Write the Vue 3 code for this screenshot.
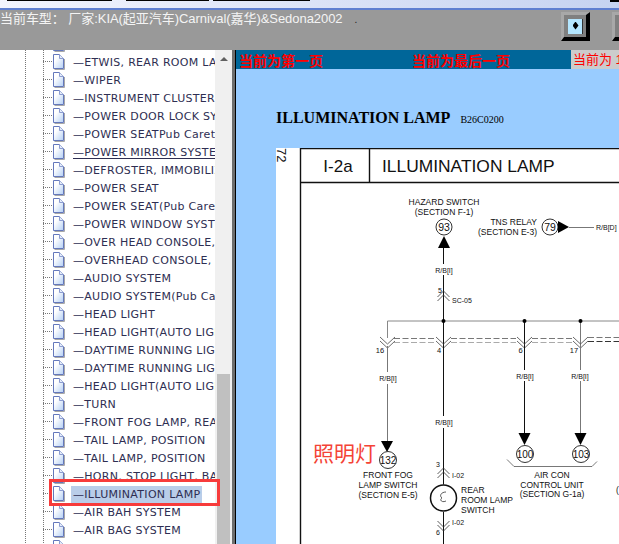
<script setup>
const items = [
  { name: '' },
  { name: 'ETWIS, REAR ROOM LAMP' },
  { name: 'WIPER' },
  { name: 'INSTRUMENT CLUSTER' },
  { name: 'POWER DOOR LOCK SYSTEM' },
  { name: 'POWER SEATPub Caret' },
  { name: 'POWER MIRROR SYSTEM', underline: true },
  { name: 'DEFROSTER, IMMOBILIZER' },
  { name: 'POWER SEAT' },
  { name: 'POWER SEAT(Pub Caret)' },
  { name: 'POWER WINDOW SYSTEM' },
  { name: 'OVER HEAD CONSOLE,' },
  { name: 'OVERHEAD CONSOLE,' },
  { name: 'AUDIO SYSTEM' },
  { name: 'AUDIO SYSTEM(Pub Caret)' },
  { name: 'HEAD LIGHT' },
  { name: 'HEAD LIGHT(AUTO LIGHT)' },
  { name: 'DAYTIME RUNNING LIGHT' },
  { name: 'DAYTIME RUNNING LIGHT' },
  { name: 'HEAD LIGHT(AUTO LIGHT)' },
  { name: 'TURN' },
  { name: 'FRONT FOG LAMP, REAR' },
  { name: 'TAIL LAMP, POSITION' },
  { name: 'TAIL LAMP, POSITION' },
  { name: 'HORN, STOP LIGHT, BACK' },
  { name: 'ILLUMINATION LAMP', selected: true },
  { name: 'AIR BAH SYSTEM' },
  { name: 'AIR BAG SYSTEM' },
  { name: '' },
]

// where each branch leaves the double bus on the wiring page
const busDrops = [
  { x: 387, num: '16', numX: 380 },
  { x: 443, num: '4', numX: 439 },
  { x: 524, num: '6', numX: 520.5 },
  { x: 580, num: '17', numX: 574 },
]
</script>

<template>
  <div class="screen">
    <svg class="defs" width="0" height="0">
      <defs>
        <linearGradient id="docFill" x1="0" y1="0" x2="1" y2="1">
          <stop offset="0.3" stop-color="#ffffff" />
          <stop offset="1" stop-color="#b4cff4" />
        </linearGradient>
      </defs>
    </svg>

    <div class="title-strip">
      <span class="seg seg-a"></span>
      <span class="seg seg-b"></span>
      <span class="seg seg-c"></span>
      <span class="seg seg-d"></span>
    </div>

    <header class="top-bar">
      <div class="car-name">当前车型： 厂家:KIA(起亚汽车)Carnival(嘉华)&amp;Sedona2002<span class="dot">.</span></div>
      <button class="nav-btn"><span class="nav-mark"></span></button>
      <button class="nav-btn"><span class="nav-mark"></span></button>
    </header>

    <div class="body-row">
      <aside class="sidebar">
        <div class="tree">
          <ul class="tree-list">
            <li v-for="(item, i) in items" :key="i" class="tree-row">
              <svg class="doc" width="13" height="16" viewBox="0 0 13 16">
                <path d="M2.5 15.5H12.5V5" fill="none" stroke="#a8a8a8" />
                <path d="M1.5 .5H7.5L11.5 4.5V14.5H1.5Z" fill="url(#docFill)" stroke="#6478bc" />
                <path d="M7.5 .5V4.5H11.5" fill="#e4ecfa" stroke="#8c9cd0" />
              </svg>
              <span
                v-if="item.name"
                class="label"
                :class="{ selected: item.selected, underline: item.underline }"
              >—{{ item.name }}</span>
            </li>
          </ul>
        </div>
        <div class="scrollbar">
          <span class="arrow"></span>
          <span class="thumb"></span>
        </div>
        <div class="highlight-box"></div>
      </aside>

      <div class="splitter"></div>

      <main class="content">
        <div class="page-nav">
          <span class="nav-first">当前为第一页</span>
          <span class="nav-last">当前为最后一页</span>
          <span class="nav-current">当前为 1</span>
        </div>

        <div class="heading">
          <h1>ILLUMINATION LAMP</h1>
          <span class="code">B26C0200</span>
        </div>

        <svg class="sheet" width="343" height="396" viewBox="276 148 343 396">
          <rect x="276" y="148" width="343" height="396" fill="#fff" />
          <text class="txt" font-size="13" transform="translate(277 148) rotate(90)">72</text>

          <!-- frame -->
          <path d="M300.5 544V148.5H619M300.5 182.5H619M369.5 148.5V182.5" fill="none" stroke="#111" stroke-width="1.4" />
          <text class="txt" x="338" y="172" font-size="17" text-anchor="middle">I-2a</text>
          <text class="txt" x="382" y="172" font-size="17.4">ILLUMINATION LAMP</text>

          <!-- hazard switch -->
          <text class="txt" x="444" y="205" font-size="8.5" text-anchor="middle">HAZARD SWITCH</text>
          <text class="txt" x="444" y="215" font-size="8.5" text-anchor="middle">(SECTION F-1)</text>
          <circle cx="444" cy="227" r="8" fill="#fff" stroke="#333" />
          <text class="txt" x="444" y="231" font-size="10.5" text-anchor="middle">93</text>
          <path d="M444 236L450 248H438Z" fill="#000" />
          <path d="M443.5 248V264M443.5 275V321" stroke="#111" />
          <text class="txt" x="444" y="273" font-size="7" text-anchor="middle">R/B[I]</text>
          <path d="M437.5 297L443.5 291L449.5 297M437.5 301L443.5 295L449.5 301" fill="none" stroke="#333" stroke-width=".8" />
          <text class="txt" x="438" y="293" font-size="7">5</text>
          <text class="txt" x="452" y="303" font-size="7">SC-05</text>

          <!-- TNS relay -->
          <text class="txt" x="537" y="225" font-size="8.5" text-anchor="end">TNS RELAY</text>
          <text class="txt" x="537" y="235" font-size="8.5" text-anchor="end">(SECTION E-3)</text>
          <circle cx="550" cy="227" r="8" fill="#fff" stroke="#333" />
          <text class="txt" x="550" y="231" font-size="10.5" text-anchor="middle">79</text>
          <path d="M558 221L569 227L558 233Z" fill="#000" />
          <path d="M569 227.5H594" stroke="#777" />
          <text class="txt" x="596" y="230" font-size="7">R/B[D]</text>

          <!-- bus -->
          <path d="M387.5 338V321H619" fill="none" stroke="#888" />
          <path d="M580.5 321V346" fill="none" stroke="#777" />
          <path d="M443.5 321V346M524.5 321V346" fill="none" stroke="#111" />
          <circle cx="443.5" cy="321" r="2" fill="#000" />
          <circle cx="524.5" cy="321" r="2" fill="#000" />
          <circle cx="580.5" cy="321" r="2" fill="#000" />
          <path d="M394 338.5H436M451 338.5H516M532 338.5H572" stroke="#777" stroke-dasharray="6 2.5" />
          <path d="M394 342.5H436M451 342.5H516M532 342.5H572" stroke="#aaa" stroke-dasharray="6 2.5" />
          <path d="M588 337.5H619" stroke="#777" stroke-dasharray="6 2.5" />
          <path d="M588 341.5H619" stroke="#333" stroke-dasharray="6 2.5" />
          <g v-for="drop in busDrops" :key="drop.x">
            <path
              :d="`M${drop.x - 7} 337L${drop.x + 0.5} 344L${drop.x + 8} 337M${drop.x - 7} 341L${drop.x + 0.5} 348L${drop.x + 8} 341`"
              fill="none"
              stroke="#444"
              stroke-width=".8"
            />
            <text class="txt" :x="drop.numX" y="353" font-size="7.5" text-anchor="middle">{{ drop.num }}</text>
          </g>

          <!-- front fog -->
          <path d="M387.5 346V372M387.5 384V441" stroke="#777" />
          <text class="txt" x="388" y="381" font-size="7" text-anchor="middle">R/B[I]</text>
          <path d="M381 441H393L387 452Z" fill="#000" />
          <circle cx="388" cy="460" r="8.5" fill="#fff" stroke="#333" />
          <text class="txt" x="388" y="464" font-size="10" text-anchor="middle">132</text>
          <text class="txt" x="388" y="478" font-size="8.5" text-anchor="middle">FRONT FOG</text>
          <text class="txt" x="388" y="488" font-size="8.5" text-anchor="middle">LAMP SWITCH</text>
          <text class="txt" x="388" y="498" font-size="8.5" text-anchor="middle">(SECTION E-5)</text>
          <text class="note" x="313" y="461" font-size="21">照明灯</text>

          <!-- rear room lamp -->
          <path d="M443.5 346V416M443.5 428V484.5M443.5 512V544" stroke="#111" />
          <text class="txt" x="444" y="424.5" font-size="7" text-anchor="middle">R/B[I]</text>
          <text class="txt" x="436" y="467" font-size="7">3</text>
          <path d="M437.5 474L443.5 468L449.5 474M437.5 478L443.5 472L449.5 478" fill="none" stroke="#333" stroke-width=".8" />
          <text class="txt" x="452" y="478" font-size="7">I-02</text>
          <circle cx="443.5" cy="498" r="13" fill="#fff" stroke="#111" stroke-width="1.5" />
          <path d="M446 492C441 492 439 496 442 498C439 500 442 503 446 501" fill="none" stroke="#333" stroke-width=".8" />
          <text class="txt" x="461" y="493" font-size="8.5">REAR</text>
          <text class="txt" x="461" y="503" font-size="8.5">ROOM LAMP</text>
          <text class="txt" x="461" y="513" font-size="8.5">SWITCH</text>
          <path d="M437.5 521L443.5 527L449.5 521M437.5 525L443.5 531L449.5 525" fill="none" stroke="#333" stroke-width=".8" />
          <text class="txt" x="452" y="525" font-size="7">I-02</text>
          <text class="txt" x="436" y="535" font-size="7">6</text>

          <!-- air con -->
          <path d="M524.5 346V370M524.5 381V433" stroke="#111" />
          <path d="M580.5 346V370M580.5 381V433" stroke="#777" />
          <text class="txt" x="525" y="379" font-size="7" text-anchor="middle">R/B[I]</text>
          <text class="txt" x="580" y="379" font-size="7" text-anchor="middle">R/B[I]</text>
          <path d="M518.5 433H530.5L524.5 445Z" fill="#000" />
          <path d="M574.5 433H586.5L580.5 445Z" fill="#000" />
          <circle cx="525" cy="454" r="8.5" fill="#fff" stroke="#333" />
          <circle cx="581" cy="454" r="8.5" fill="#fff" stroke="#333" />
          <text class="txt" x="525" y="458" font-size="10" text-anchor="middle">100</text>
          <text class="txt" x="581" y="458" font-size="10" text-anchor="middle">103</text>
          <path d="M507 459.5L514 466.5H592L597 461.5" fill="none" stroke="#555" stroke-width=".8" />
          <text class="txt" x="552" y="478" font-size="8.5" text-anchor="middle">AIR CON</text>
          <text class="txt" x="552" y="488" font-size="8.5" text-anchor="middle">CONTROL UNIT</text>
          <text class="txt" x="552" y="497" font-size="8.5" text-anchor="middle">(SECTION G-1a)</text>
          <text class="txt" x="616" y="493" font-size="8.5">(</text>
        </svg>
      </main>
    </div>
  </div>
</template>

<style>
html,
body {
  margin: 0;
  overflow: hidden;
}
</style>

<style scoped>
.screen {
  width: 619px;
  height: 544px;
  overflow: hidden;
  display: flex;
  flex-direction: column;
  position: relative;
  font-family: "Liberation Sans", "Noto Sans CJK SC", sans-serif;
}

.defs {
  position: absolute;
}

.title-strip {
  height: 8px;
  flex: none;
  position: relative;
  background: linear-gradient(to right, #f2f4fd, #c6d3f1);
  border-bottom: 2px solid #5f7fd0;
}

.seg {
  position: absolute;
  top: 0;
  height: 1px;
  background: #000;
}

.seg-a {
  left: 7px;
  width: 105px;
}

.seg-b {
  left: 126px;
  width: 83px;
}

.seg-c {
  left: 213px;
  width: 97px;
}

.seg-d {
  left: 610px;
  width: 9px;
  height: 2px;
}

.top-bar {
  height: 40px;
  flex: none;
  display: flex;
  align-items: flex-start;
  gap: 22px;
  padding-top: 2px;
  box-sizing: border-box;
  background: #999;
}

.car-name {
  width: 539px;
  flex: none;
  color: #f4f4f4;
  font-size: 13px;
  line-height: 14px;
  letter-spacing: -0.05px;
  white-space: nowrap;
}

.dot {
  margin-left: 12px;
  color: #222;
  font-size: 10px;
}

.nav-btn {
  flex: none;
  width: 29px;
  height: 29px;
  padding: 0;
  box-sizing: border-box;
  background: #808080;
  border-style: solid;
  border-width: 3px 4px 4px 3px;
  border-color: #a8a8a8 #000 #000 #a8a8a8;
  display: flex;
  align-items: center;
  justify-content: center;
}

.nav-mark {
  width: 15px;
  height: 15px;
  box-sizing: border-box;
  border-right: 1px solid #333;
  background: #b4e6ff;
  position: relative;
}

.nav-mark::after {
  content: "";
  position: absolute;
  left: 5px;
  top: 3px;
  width: 6px;
  height: 8px;
  background: #000;
  clip-path: polygon(50% 0, 100% 50%, 50% 100%, 0 50%);
}

.body-row {
  flex: 1;
  min-height: 0;
  display: flex;
}

.sidebar {
  width: 232px;
  flex: none;
  display: flex;
  position: relative;
  background: #fff;
}

.tree {
  width: 215px;
  flex: none;
  overflow: hidden;
  background-image:
    repeating-linear-gradient(to bottom, #777 0 1px, transparent 1px 2px),
    repeating-linear-gradient(to bottom, #777 0 1px, transparent 1px 2px);
  background-size: 1px 100%;
  background-position: 25px 0, 43px 0;
  background-repeat: no-repeat;
}

.tree-list {
  list-style: none;
  margin: -15px 0 0;
  padding: 0;
}

.tree-row {
  height: 18px;
  display: flex;
  align-items: center;
  padding-left: 52px;
  position: relative;
}

.tree-row::before {
  content: "";
  position: absolute;
  left: 43px;
  top: 8px;
  width: 9px;
  height: 1px;
  background: repeating-linear-gradient(to right, #777 0 1px, transparent 1px 2px);
}

.doc {
  flex: none;
}

.label {
  margin-left: 6px;
  padding: 0 2px;
  height: 17px;
  line-height: 17px;
  font-family: "DejaVu Sans", sans-serif;
  font-size: 11px;
  letter-spacing: 0.3px;
  color: #2e2e52;
  white-space: nowrap;
}

.label.selected {
  background: #b9cde9;
}

.label.underline {
  text-decoration: underline;
  text-underline-offset: 2px;
}

.scrollbar {
  width: 17px;
  flex: none;
  display: flex;
  flex-direction: column;
  align-items: flex-start;
  background: #f0f0f0;
}

.arrow {
  margin: 7px 0 0 5px;
  width: 0;
  height: 0;
  border-left: 4px solid transparent;
  border-right: 4px solid transparent;
  border-bottom: 4px solid #606060;
}

.thumb {
  margin: auto 0 0 2px;
  width: 13px;
  height: 170px;
  background: #c0c0c0;
}

.highlight-box {
  position: absolute;
  left: 49px;
  top: 429px;
  width: 171px;
  height: 27px;
  box-sizing: border-box;
  border: 3px solid #f73b3b;
}

.splitter {
  width: 4px;
  flex: none;
  box-sizing: border-box;
  background: #6e6e6e;
  border-right: 1px solid #000;
}

.content {
  flex: 1;
  min-width: 0;
  overflow: hidden;
  background: #99ccff;
}

.page-nav {
  height: 19px;
  display: flex;
  align-items: center;
  padding-left: 3px;
  background: #006699;
  color: #ff0000;
  font-size: 14px;
  font-weight: 700;
  white-space: nowrap;
}

.nav-last {
  margin-left: 89px;
}

.nav-current {
  margin-left: 61px;
  padding-left: 2px;
  height: 19px;
  line-height: 19px;
  flex: 1;
  background: #cccccc;
  font-size: 13px;
  font-weight: 400;
}

.heading {
  height: 79px;
  box-sizing: border-box;
  padding: 40px 0 0 40px;
  display: flex;
  align-items: baseline;
  gap: 10px;
}

.heading h1 {
  margin: 0;
  font-family: "Liberation Serif", serif;
  font-size: 16px;
  font-weight: 700;
  color: #000;
}

.code {
  font-family: "Liberation Serif", serif;
  font-size: 10px;
  color: #000;
}

.sheet {
  display: block;
  margin-left: 40px;
}

.txt {
  font-family: "Liberation Sans", sans-serif;
  fill: #111;
}

.note {
  font-family: "Noto Sans CJK SC", sans-serif;
  fill: #f44336;
}
</style>
